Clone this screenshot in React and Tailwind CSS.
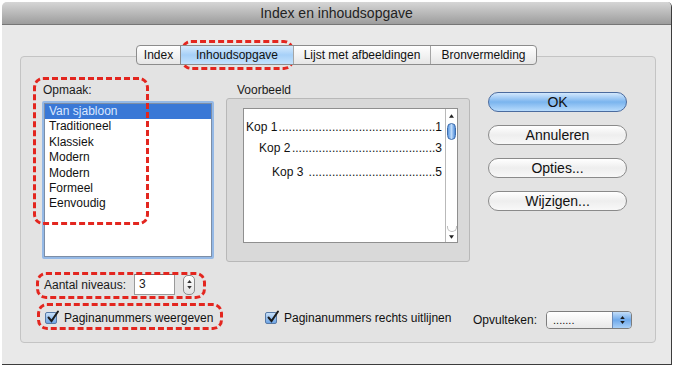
import React from 'react';

const items = ['Van sjabloon', 'Traditioneel', 'Klassiek', 'Modern', 'Modern', 'Formeel', 'Eenvoudig'];

function Mark({className}) {
    return <div className={`absolute border-[3px] border-dashed border-[#e3261f] rounded-[10px] ${className}`}/>;
}

function CheckBox() {
    return (
        <div
            className="relative w-[12px] h-[12px] shrink-0 rounded-[2px] border border-[#587aa6] bg-gradient-to-b from-[#c8e0f8] to-[#6ea4e4]">
            <svg viewBox="0 0 14 14" className="absolute -top-[3px] -left-[0px] w-[14px] h-[14px]">
                <path d="M2.5 7.5 L5.5 11 L12 1.5" stroke="#1b1b1b" strokeWidth="2" fill="none" strokeLinecap="round"/>
            </svg>
        </div>
    );
}

function AquaButton({children, primary}) {
    return (
        <div
            className={
                primary
                    ? 'h-[20px] rounded-full border border-[#4b6b9e] bg-gradient-to-b from-[#d3e8fd] via-[#7ab4ee] to-[#b7dbfc] flex items-center justify-center text-[14px] text-[#111]'
                    : 'h-[20px] rounded-full border border-[#8a8a8a] bg-gradient-to-b from-[#ffffff] via-[#eeeeee] to-[#f8f8f8] flex items-center justify-center text-[14px] text-[#111]'
            }
        >
            {children}
        </div>
    );
}

function Row({label, num, count, indent, gap}) {
    return (
        <div className={`flex h-[16px] leading-[16px] text-[12px] text-[#111] ${gap}`}>
            <span className={`whitespace-pre ${indent}`}>{label}</span>
            <span className="ml-auto whitespace-nowrap">{'.'.repeat(count)}{num}</span>
        </div>
    );
}

export default function App() {
    return (
        <div
            className="relative w-[675px] h-[367px] bg-white overflow-hidden font-['Liberation_Sans',Arial,sans-serif] text-[#1a1a1a]">
            <div
                className="ml-[2px] mt-[2px] w-[670px] h-[363px] flex flex-col bg-[#e9e9e9] border-r border-b border-[#3c3c3c] rounded-t-[5px] overflow-hidden">
                <div
                    className="h-[23px] shrink-0 flex items-center justify-center bg-gradient-to-b from-[#d6d6d6] to-[#9d9d9d] border-b border-[#767676] text-[14px] text-[#222]">
                    Index en inhoudsopgave
                </div>

                <div className="flex flex-col">
                    <div className="relative z-10 mt-[20px] flex justify-center">
                        <div
                            className="flex h-[20px] rounded-[4px] border border-[#8c8c8c] overflow-hidden text-[12px] text-[#111] bg-gradient-to-b from-[#ffffff] to-[#e6e6e6]">
                            <div className="w-[43px] flex items-center justify-center">Index</div>
                            <div
                                className="w-[113px] flex items-center justify-center border-l border-[#8c8c8c] bg-gradient-to-b from-[#d6ebfd] via-[#a6d0f8] to-[#c4e2fc]">
                                Inhoudsopgave
                            </div>
                            <div className="w-[137px] flex items-center justify-center border-l border-[#a5a5a5]">
                                Lijst met afbeeldingen
                            </div>
                            <div className="w-[106px] flex items-center justify-center border-l border-[#a5a5a5]">
                                Bronvermelding
                            </div>
                        </div>
                    </div>

                    <div
                        className="-mt-[9px] ml-[18px] w-[636px] h-[287px] rounded-[4px] border border-[#c4c4c4] bg-[#e3e3e3] pt-[26px] pl-[21px]">
                        <div className="flex items-start">
                            <div className="w-[172px] shrink-0 flex flex-col">
                                <div className="h-[14px] leading-[14px] text-[12px] pl-[1px]">Opmaak:</div>
                                <div
                                    className="mt-[4px] h-[158px] border-2 border-[#95b9e6] rounded-[2px]">
                                    <div className="h-full border border-[#7d8ea6] bg-white text-[12px]">
                                        {items.map((it, i) => (
                                            <div
                                                key={i}
                                                className={
                                                    i === 0
                                                        ? 'h-[15.4px] leading-[15.4px] pl-[4px] bg-[#3a78d6] text-[#dbe7ff]'
                                                        : 'h-[15.4px] leading-[15.4px] pl-[4px] text-[#111]'
                                                }
                                            >
                                                {it}
                                            </div>
                                        ))}
                                    </div>
                                </div>
                                <div className="mt-[15px] h-[21px] flex items-center text-[12px]">
                                    <div className="w-[92px] pl-[2px]">Aantal niveaus:</div>
                                    <div
                                        className="w-[41px] h-[21px] border border-[#9a9a9a] border-t-[#6f6f6f] bg-white pl-[4px] leading-[19px]">
                                        3
                                    </div>
                                    <div
                                        className="ml-[8px] w-[12px] h-[20px] rounded-[5px] border border-[#8a8a8a] bg-gradient-to-b from-[#ffffff] to-[#e2e2e2] flex flex-col items-center justify-center gap-[3px]">
                                        <svg viewBox="0 0 6 4" className="w-[5px] h-[3px]">
                                            <path d="M0 4 L3 0 L6 4 Z" fill="#333"/>
                                        </svg>
                                        <svg viewBox="0 0 6 4" className="w-[5px] h-[3px]">
                                            <path d="M0 0 L3 4 L6 0 Z" fill="#333"/>
                                        </svg>
                                    </div>
                                </div>
                            </div>

                            <div className="ml-[12px] w-[244px] shrink-0 flex flex-col">
                                <div className="h-[14px] leading-[14px] text-[12px] pl-[11px]">Voorbeeld</div>
                                <div
                                    className="mt-[1px] h-[164px] rounded-[3px] border border-[#b8b8b8] bg-[#d9d9d9] pt-[9px] pl-[16px]">
                                    <div className="w-[215px] h-[135px] border border-[#8f8f8f] bg-white flex">
                                        <div className="flex-1 min-w-0 pl-[2px] pr-[3px] pt-[10px] flex flex-col">
                                            <Row label="Kop 1" num="1" count={47} indent="" gap=""/>
                                            <Row label="Kop 2" num="3" count={43} indent="ml-[13px]" gap="mt-[5px]"/>
                                            <Row label="Kop 3 " num="5" count={38} indent="ml-[26px]" gap="mt-[8px]"/>
                                        </div>
                                        <div
                                            className="w-[12px] shrink-0 border-l border-[#b9b9b9] bg-white flex flex-col items-center pt-[5px] pb-[3px]">
                                            <svg viewBox="0 0 6 4" className="w-[5px] h-[4px]">
                                                <path d="M0 4 L3 0 L6 4 Z" fill="#222"/>
                                            </svg>
                                            <div
                                                className="mt-[5px] w-[9px] h-[17px] rounded-full border border-[#3d6cab] bg-gradient-to-r from-[#5c98e0] via-[#bfdcfb] to-[#4e8ad6]"/>
                                            <div className="flex-1"/>
                                            <div
                                                className="w-[10px] h-[6px] rounded-b-full border-b border-l border-r border-[#bdbdbd]"/>
                                            <svg viewBox="0 0 6 4" className="mt-[3px] w-[5px] h-[4px]">
                                                <path d="M0 0 L3 4 L6 0 Z" fill="#222"/>
                                            </svg>
                                        </div>
                                    </div>
                                </div>
                            </div>

                            <div className="ml-[18px] w-[139px] shrink-0 pt-[9px] flex flex-col gap-[13px]">
                                <AquaButton primary>OK</AquaButton>
                                <AquaButton>Annuleren</AquaButton>
                                <AquaButton>Opties...</AquaButton>
                                <AquaButton>Wijzigen...</AquaButton>
                            </div>
                        </div>

                        <div className="mt-[14px] h-[18px] pl-[3px] flex items-center text-[12px] text-[#111]">
                            <div className="w-[220px] flex items-center">
                                <CheckBox/>
                                <span className="ml-[7px]">Paginanummers weergeven</span>
                            </div>
                            <div className="w-[208px] flex items-center">
                                <CheckBox/>
                                <span className="ml-[7px]">Paginanummers rechts uitlijnen</span>
                            </div>
                            <span className="mt-[4px]">Opvulteken:</span>
                            <div
                                className="ml-[9px] mt-[3px] w-[86px] h-[18px] rounded-[4px] border border-[#7d7d7d] flex overflow-hidden">
                                <div
                                    className="flex-1 bg-gradient-to-b from-[#ffffff] to-[#e9e9e9] pl-[6px] text-[11px] leading-[16px]">
                                    .......
                                </div>
                                <div
                                    className="w-[19px] bg-gradient-to-b from-[#c3def9] via-[#6fa9ea] to-[#a9d0f8] border-l border-[#6b8bb8] flex flex-col items-center justify-center gap-[2px]">
                                    <svg viewBox="0 0 6 4" className="w-[5px] h-[3px]">
                                        <path d="M0 4 L3 0 L6 4 Z" fill="#1a1a1a"/>
                                    </svg>
                                    <svg viewBox="0 0 6 4" className="w-[5px] h-[3px]">
                                        <path d="M0 0 L3 4 L6 0 Z" fill="#1a1a1a"/>
                                    </svg>
                                </div>
                            </div>
                        </div>
                    </div>
                </div>
            </div>

            <Mark className="left-[181px] top-[40px] w-[113px] h-[30px]"/>
            <Mark className="left-[33px] top-[77px] w-[116px] h-[148px]"/>
            <Mark className="left-[36px] top-[272px] w-[170px] h-[27px]"/>
            <Mark className="left-[37px] top-[303px] w-[186px] h-[27px]"/>
        </div>
    );
}
